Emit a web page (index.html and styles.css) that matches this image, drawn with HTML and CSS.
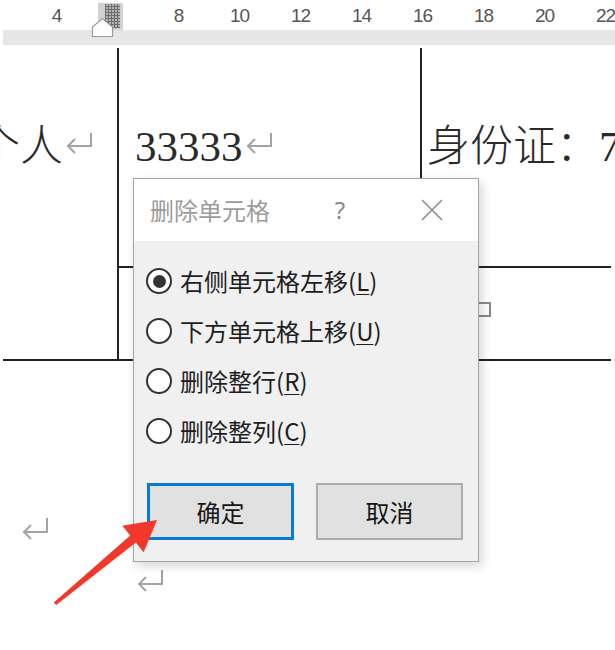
FILE: index.html
```html
<!DOCTYPE html>
<html lang="zh-CN">
<head>
<meta charset="utf-8">
<title>删除单元格</title>
<link rel="stylesheet" href="styles.css">
</head>
<body>
<div class="page">
  <div class="ruler">
    <div class="ruler-nums">
      <span>4</span><span>6</span><span>8</span><span>10</span><span>12</span><span>14</span><span>16</span><span>18</span><span>20</span><span>22</span>
    </div>
    <div class="ruler-band"></div>
    <div class="ruler-block"><div class="hatch"></div></div>
    <svg class="indent-marker" width="24" height="21" viewBox="0 0 24 21"><polygon points="1.5,10 11.5,1.5 21.5,10 21.5,19.5 1.5,19.5" fill="#fff" stroke="#9a9a9a" stroke-width="1.2"/></svg>
  </div>

  <div class="doc">
    <div class="grid">
      <div class="cell cell-a"><p class="line shift">个人<svg class="pm" width="30" height="24" viewBox="0 0 30 24"><path d="M27 2V15H4M11 8L4 15L11 22" fill="none" stroke="#a3a3a3" stroke-width="2"/></svg></p></div>
      <div class="cell cell-b"><p class="line"><span class="serif">33333</span><svg class="pm" width="30" height="24" viewBox="0 0 30 24"><path d="M27 2V15H4M11 8L4 15L11 22" fill="none" stroke="#a3a3a3" stroke-width="2"/></svg></p></div>
      <div class="cell cell-c"><p class="line">身份证：<span class="serif">7</span></p></div>
      <div class="cell cell-d"></div>
      <div class="cell cell-e"><span class="endmark"></span></div>
    </div>
    <div class="marks">
      <svg class="pmark m1" width="30" height="26" viewBox="0 0 30 26"><path d="M27 2V16H4M11 9L4 16L11 23" fill="none" stroke="#a3a3a3" stroke-width="2"/></svg>
      <svg class="pmark m2" width="30" height="26" viewBox="0 0 30 26"><path d="M27 2V16H4M11 9L4 16L11 23" fill="none" stroke="#a3a3a3" stroke-width="2"/></svg>
    </div>
  </div>

  <div class="dialog">
    <div class="titlebar">
      <span class="title">删除单元格</span>
      <span class="help">?</span>
      <span class="close"><svg width="22" height="22" viewBox="0 0 22 22"><path d="M1 1L21 21M21 1L1 21" stroke="#8c8c8c" stroke-width="1.6"/></svg></span>
    </div>
    <div class="body">
      <div class="option"><span class="radio checked"></span><span class="label">右侧单元格左移(<u>L</u>)</span></div>
      <div class="option"><span class="radio"></span><span class="label">下方单元格上移(<u>U</u>)</span></div>
      <div class="option"><span class="radio"></span><span class="label">删除整行(<u>R</u>)</span></div>
      <div class="option"><span class="radio"></span><span class="label">删除整列(<u>C</u>)</span></div>
      <div class="buttons">
        <button class="btn primary">确定</button>
        <button class="btn">取消</button>
      </div>
    </div>
  </div>

  <svg class="arrow" width="615" height="650" viewBox="0 0 615 650">
    <polygon points="157,520 143.7,552.2 135.8,542.4 56.2,605 53.8,602.4 130.2,535.6 122.3,525.8" fill="#f4372b"/>
  </svg>
</div>
</body>
</html>
```

FILE: styles.css
```css
html, body {
  margin: 0;
  padding: 0;
  background: #fff;
}

.page {
  position: relative;
  width: 615px;
  height: 650px;
  overflow: hidden;
  background: #fff;
  font-family: "Noto Sans CJK SC", sans-serif;
}

/* ruler */
.ruler {
  position: relative;
  height: 48px;
}

.ruler-nums {
  display: flex;
  height: 30px;
  padding-left: 26px;
  padding-top: 2px;
  box-sizing: border-box;
}

.ruler-nums span {
  flex: 0 0 61px;
  text-align: center;
  font-family: "Liberation Sans", Arial, sans-serif;
  font-size: 19px;
  letter-spacing: -1px;
  line-height: 28px;
  color: #555;
}

.ruler-band {
  height: 15px;
  margin-left: 3px;
  background: #e6e6e6;
}

.ruler-block {
  position: absolute;
  left: 98px;
  top: 3px;
  width: 25px;
  height: 27px;
  background: #d2d2d2;
}

.hatch {
  position: absolute;
  left: 7px;
  top: 1px;
  width: 15px;
  height: 24px;
  background:
    repeating-linear-gradient(90deg, #6e6e6e 0 1px, transparent 1px 3px),
    repeating-linear-gradient(0deg, #6e6e6e 0 1px, #b4b4b4 1px 3px);
}

.indent-marker {
  position: absolute;
  left: 91px;
  top: 17px;
}

/* document table */
.doc {
  color: #2a2a2a;
}

.grid {
  display: grid;
  grid-template-columns: 116px 303px 189px;
  grid-template-rows: 220px 93px;
  margin-left: 3px;
}

.cell {
  box-sizing: border-box;
  min-width: 0;
}

.cell-a {
  grid-column: 1;
  grid-row: 1 / 3;
  border-right: 2px solid #222;
  border-bottom: 2px solid #222;
}

.cell-b {
  grid-column: 2;
  grid-row: 1;
  border-right: 2px solid #222;
  border-bottom: 2px solid #222;
  padding-left: 16px;
}

.cell-c {
  grid-column: 3;
  grid-row: 1;
  border-bottom: 2px solid #222;
  padding-left: 5px;
  white-space: nowrap;
}

.cell-d {
  grid-column: 2;
  grid-row: 2;
  border-right: 2px solid #222;
  border-bottom: 2px solid #222;
}

.cell-e {
  grid-column: 3;
  grid-row: 2;
  border-bottom: 2px solid #222;
}

.line {
  margin: 72px 0 0;
  font-size: 43px;
  line-height: 44px;
  height: 44px;
  white-space: nowrap;
  font-family: "Noto Sans CJK SC", sans-serif;
  font-weight: 300;
}

.shift {
  margin-left: -26px;
}

.serif {
  font-family: "Liberation Serif", "Times New Roman", serif;
  font-weight: 400;
}

.pm {
  vertical-align: 6px;
  margin-left: 1px;
}

.endmark {
  display: block;
  width: 15px;
  height: 15px;
  margin: 34px 0 0 54px;
  border: 2px solid #8a8a8a;
  box-sizing: border-box;
}

.marks {
  display: flex;
  flex-direction: column;
}

.pmark {
  display: block;
}

.m1 {
  margin: 155px 0 0 20px;
}

.m2 {
  margin: 26px 0 0 135px;
}

/* dialog */
.dialog {
  position: absolute;
  left: 133px;
  top: 178px;
  width: 346px;
  height: 384px;
  box-sizing: border-box;
  border: 1px solid #a3a3a3;
  background: #f0f0f0;
  box-shadow: 3px 4px 10px rgba(0, 0, 0, 0.16);
}

.titlebar {
  display: flex;
  align-items: center;
  height: 62px;
  background: #fff;
  padding-left: 16px;
}

.title {
  flex: 1;
  font-size: 24px;
  color: #9c9c9c;
  line-height: 30px;
}

.help {
  width: 30px;
  text-align: center;
  margin-right: 62px;
  font-size: 24px;
  color: #8a8a8a;
  font-family: "Noto Sans", sans-serif;
  line-height: 30px;
}

.close {
  width: 30px;
  margin-right: 31px;
  display: flex;
  justify-content: center;
  align-items: center;
}

.body {
  padding: 15px 0 0 12px;
}

.option {
  display: flex;
  align-items: center;
  height: 50px;
}

.radio {
  flex: 0 0 26px;
  width: 26px;
  height: 26px;
  box-sizing: border-box;
  border: 2px solid #333;
  border-radius: 50%;
  background: #fff;
  margin-right: 8px;
  display: flex;
  align-items: center;
  justify-content: center;
}

.radio.checked::after {
  content: "";
  width: 13px;
  height: 13px;
  border-radius: 50%;
  background: #333;
}

.label {
  font-size: 24px;
  color: #1e1e1e;
  line-height: 30px;
  white-space: nowrap;
}

.label u {
  text-underline-offset: 3px;
  text-decoration-thickness: 1px;
}

.buttons {
  display: flex;
  gap: 22px;
  margin-top: 27px;
  padding-left: 1px;
}

.btn {
  width: 147px;
  height: 57px;
  box-sizing: border-box;
  border: 2px solid #adadad;
  background: #e1e1e1;
  font-family: "Noto Sans CJK SC", sans-serif;
  font-size: 24px;
  color: #161616;
  padding: 0;
  margin: 0;
}

.btn.primary {
  border: 3px solid #0a7ad6;
}

.arrow {
  position: absolute;
  left: 0;
  top: 0;
  pointer-events: none;
}
```
